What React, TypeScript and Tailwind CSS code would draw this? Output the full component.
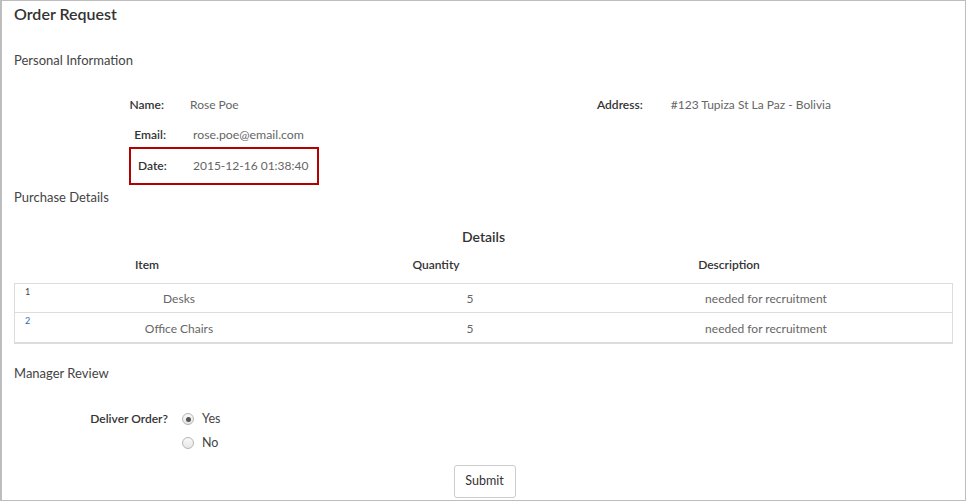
import React from "react";

const font = { fontFamily: "Lato, 'Open Sans', sans-serif" };

function Radio({ checked }: { checked?: boolean }) {
  return (
    <span className="flex h-[12px] w-[12px] items-center justify-center rounded-full border border-[#b5b5b5] bg-gradient-to-b from-[#fafafa] to-[#e6e6e6]">
      {checked && <span className="h-[5px] w-[5px] rounded-full bg-[#555]" />}
    </span>
  );
}

export default function App() {
  const rows = [
    { n: "1", item: "Desks", qty: "5", desc: "needed for recruitment", numColor: "text-[#444]" },
    { n: "2", item: "Office Chairs", qty: "5", desc: "needed for recruitment", numColor: "text-[#2a6ab0]" },
  ];
  return (
    <div style={font} className="h-[501px] w-[966px] bg-white text-[13px] text-[#444]">
      <div className="flex h-[501px] w-[966px] flex-col border border-l-2 border-[#bdbdbd] px-[12px]">
        <div className="mt-[3px] h-[20px] text-[16px] font-semibold leading-[20px] text-[#333]">Order Request</div>
        <div className="mt-[27px] h-[18px] leading-[18px]">Personal Information</div>

        {/* Name + Address */}
        <div className="mt-[27px] flex h-[18px] items-center leading-[18px]">
          <div className="w-[150px] text-right text-[12px] font-semibold text-[#333]">Name:</div>
          <div className="ml-[26px] w-[407px] text-[12px] text-[#666]">Rose Poe</div>
          <div className="text-[12px] font-semibold text-[#333]">Address:</div>
          <div className="ml-[28px] text-[12px] text-[#666]">#123 Tupiza St La Paz - Bolivia</div>
        </div>
        <div className="mt-[12px] flex h-[18px] items-center leading-[18px]">
          <div className="w-[152px] text-right text-[12px] font-semibold text-[#333]">Email:</div>
          <div className="ml-[27px] text-[12.3px] text-[#666]">rose.poe@email.com</div>
        </div>
        <div className="ml-[115px] mt-[3px] flex h-[38px] w-[190px] items-center border-2 border-[#b30000] pl-[7px]">
          <div className="w-[48px] text-[12px] font-semibold text-[#333]">Date:</div>
          <div className="ml-[7px] text-[12px] text-[#666]">2015-12-16 01:38:40</div>
        </div>

        <div className="mt-[3px] h-[18px] leading-[18px]">Purchase Details</div>
        <div className="mt-[21px] h-[20px] text-center text-[14px] font-semibold leading-[20px] text-[#333]">Details</div>
        <div className="mt-[8px] grid h-[20px] grid-cols-[266px_312px_274px] text-[12px] font-semibold leading-[20px] text-[#333]">
          <div className="text-center">Item</div>
          <div className="text-center">Quantity</div>
          <div className="text-center">Description</div>
        </div>
        <div className="mt-[8px] border border-b-2 border-[#dcdcdc]">
          {rows.map((r, i) => (
            <div
              key={r.n}
              className={`relative grid h-[29px] grid-cols-[20px_288px_294px_298px_1fr] items-center text-[12px] text-[#666] ${i === 0 ? "border-b border-[#dcdcdc]" : ""}`}
            >
              <div className={`absolute left-[10px] top-[1px] text-[9px] ${r.numColor}`}>{r.n}</div>
              <div />
              <div className="pt-[2px] text-center">{r.item}</div>
              <div className="pt-[2px] text-center">{r.qty}</div>
              <div className="pt-[2px] text-center">{r.desc}</div>
              <div />
            </div>
          ))}
        </div>

        <div className="mt-[20px] h-[18px] leading-[18px]">Manager Review</div>
        <div className="mt-[28px] flex">
          <div className="w-[154px] text-right text-[12px] font-semibold leading-[18px] text-[#333]">Deliver Order?</div>
          <div className="ml-[14px] flex flex-col gap-[6px]">
            <label className="flex h-[18px] items-center gap-[8px] text-[12.5px] text-[#444]">
              <Radio checked />
              <span>Yes</span>
            </label>
            <label className="flex h-[18px] items-center gap-[8px] text-[12.5px] text-[#444]">
              <Radio />
              <span>No</span>
            </label>
          </div>
        </div>
        <div className="mt-[13px] flex justify-center">
          <button className="ml-[2px] h-[33px] w-[62px] rounded-[3px] border border-[#ccc] bg-white text-[12.5px] text-[#333]">
            Submit
          </button>
        </div>
      </div>
    </div>
  );
}
